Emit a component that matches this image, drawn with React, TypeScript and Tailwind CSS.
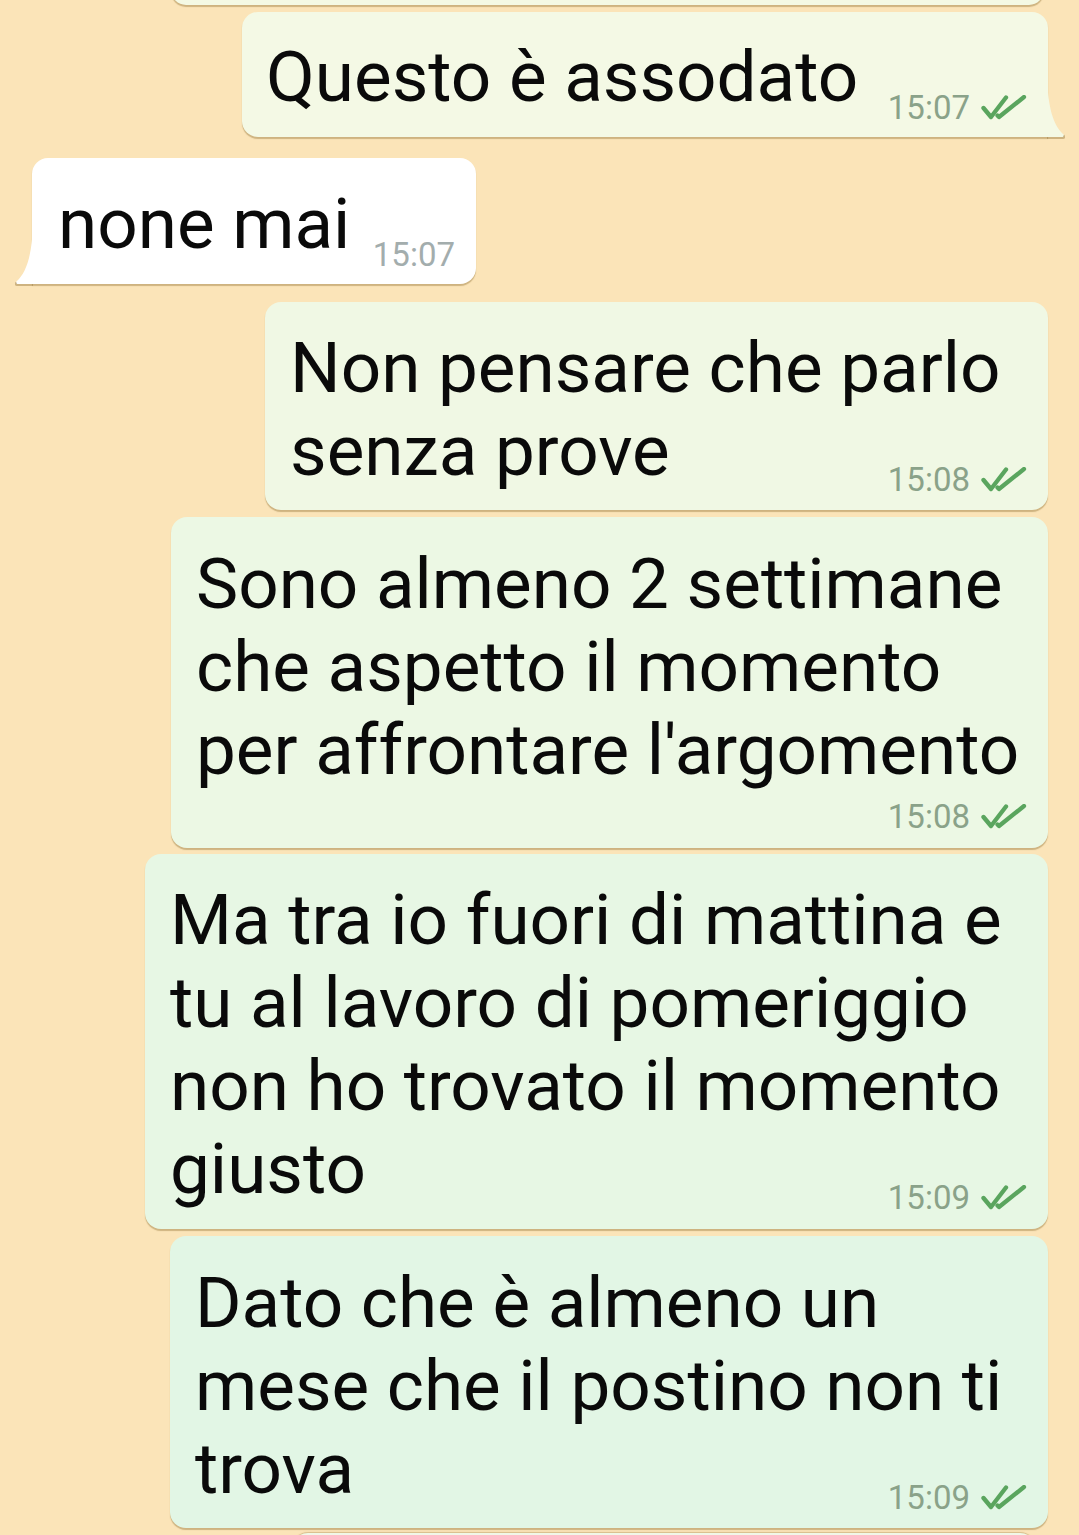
import React from "react";

function Ticks() {
  return (
    <svg width="46" height="26" viewBox="0 0 46 26" className="shrink-0">
      <path d="M2.5 13 L10 22 L25 2.5" fill="none" stroke="#5aa55e" strokeWidth="4.3" strokeLinecap="round" strokeLinejoin="round" />
      <path d="M16.5 20.5 L18 22 L43 2" fill="none" stroke="#5aa55e" strokeWidth="4.3" strokeLinecap="round" strokeLinejoin="round" />
    </svg>
  );
}

function Time({ t, out = true }: { t: string; out?: boolean }) {
  return (
    <div className="flex items-center gap-[11px] shrink-0">
      <span className={out ? "text-[33px] leading-none text-[#8aa289]" : "text-[33px] leading-none text-[#a3adad]"}>{t}</span>
      {out && <Ticks />}
    </div>
  );
}

type BubbleProps = {
  lines: string[];
  time: string;
  cls: string;
  ownRow?: boolean;
};

function OutBubble({ lines, time, cls, ownRow }: BubbleProps) {
  const head = ownRow ? lines : lines.slice(0, -1);
  const last = ownRow ? null : lines[lines.length - 1];
  return (
    <div className={"relative shrink-0 self-end mr-[31px] rounded-[16px] pl-[25px] pr-[21px] shadow-[0_2px_1px_rgba(150,120,60,0.45)] " + cls}>
      {head.map((l, i) => (
        <div key={i} className="whitespace-nowrap">{l}</div>
      ))}
      {last !== null ? (
        <div className="flex items-end justify-between gap-[24px]">
          <span className="whitespace-nowrap">{last}</span>
          <div className="mb-[-4px]">
            <Time t={time} />
          </div>
        </div>
      ) : (
        <div className="flex justify-end mt-[9px]">
          <Time t={time} />
        </div>
      )}
    </div>
  );
}

export default function App() {
  return (
    <div className="h-[1535px] overflow-hidden bg-[#fbe4b8] font-['Roboto',sans-serif] text-[71px] leading-[83px] text-[#0a0a0a] flex flex-col">
      {/* previous bubble stub */}
      <div className="ml-[171px] w-[873px] h-[30px] mt-[-25px] shrink-0 rounded-[16px] bg-[#f4f9e4] shadow-[0_2px_1px_rgba(150,120,60,0.45)]" />

      {/* Questo è assodato */}
      <div className="relative shrink-0 self-end mr-[31px] mt-[7px] w-[806px] h-[125px] rounded-[16px] rounded-br-none bg-[#f4f9e5] pl-[24px] pr-[21px] pt-[23px] shadow-[0_2px_1px_rgba(150,120,60,0.45)]">
        <div className="flex items-end justify-between">
          <span className="whitespace-nowrap">Questo è assodato</span>
          <div className="mb-[-6px]">
            <Time t="15:07" />
          </div>
        </div>
        <svg className="absolute right-[-17px] bottom-[-2px]" width="18" height="62" viewBox="0 0 18 62">
          <path d="M0 0 L0 58 L0 60 L16 60 C17.5 60 17.5 58.5 16.5 57.5 C6 48 1 30 0 0 Z" fill="#f4f9e5" />
          <path d="M0 60 L16 60 C17.5 60 17.5 58.5 16.5 57.5" fill="none" stroke="rgba(150,120,60,0.45)" strokeWidth="2" transform="translate(0 1)" />
        </svg>
      </div>

      {/* none mai */}
      <div className="relative shrink-0 self-start ml-[32px] mt-[21px] w-[444px] h-[126px] rounded-[16px] rounded-bl-none bg-white pl-[26px] pr-[21px] pt-[24px] shadow-[0_2px_1px_rgba(150,120,60,0.45)]">
        <div className="flex items-end justify-between">
          <span className="whitespace-nowrap">none mai</span>
          <div className="mb-[-6px]">
            <Time t="15:07" out={false} />
          </div>
        </div>
        <svg className="absolute left-[-17px] bottom-[-2px]" width="18" height="62" viewBox="0 0 18 62">
          <path d="M18 0 L18 60 L2 60 C0.5 60 0.5 58.5 1.5 57.5 C12 48 17 30 18 0 Z" fill="#ffffff" />
          <path d="M18 60 L2 60 C0.5 60 0.5 58.5 1.5 57.5" fill="none" stroke="rgba(150,120,60,0.45)" strokeWidth="2" transform="translate(0 1)" />
        </svg>
      </div>

      <OutBubble cls="mt-[18px] w-[783px] bg-[#f0f8e4] pt-[24px] pb-[18px]" lines={["Non pensare che parlo", "senza prove"]} time="15:08" />
      <OutBubble cls="mt-[7px] w-[877px] bg-[#ecf8e4] pt-[25px] pb-[15px]" ownRow lines={["Sono almeno 2 settimane", "che aspetto il momento", "per affrontare l'argomento"]} time="15:08" />
      <OutBubble cls="mt-[6px] w-[903px] bg-[#e7f7e4] pt-[24px] pb-[19px]" lines={["Ma tra io fuori di mattina e", "tu al lavoro di pomeriggio", "non ho trovato il momento", "giusto"]} time="15:09" />
      <OutBubble cls="mt-[7px] w-[878px] bg-[#e2f6e5] pt-[25px] pb-[18px]" lines={["Dato che è almeno un", "mese che il postino non ti", "trova"]} time="15:09" />
      <div className="shrink-0 ml-[292px] w-[744px] mt-[5px] h-[40px] rounded-[16px] bg-[#f0f8e8] shadow-[0_-1px_1px_rgba(150,120,60,0.35)]" />
    </div>
  );
}
